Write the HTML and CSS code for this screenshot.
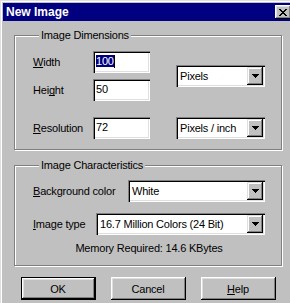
FILE: index.html
```html
<!DOCTYPE html>
<html lang="en">
<head>
    <meta charset="UTF-8">
    <title>New Image</title>
    <link rel="stylesheet" href="styles.css">
</head>
<body>
    <div class="dialog">
        <div class="titlebar">
            <span class="title">New Image</span>
            <span class="close-btn">
                <svg width="8" height="7" viewBox="0 0 8 7" shape-rendering="crispEdges"><path d="M0 0h2v1H0z M6 0h2v1H6z M1 1h2v1H1z M5 1h2v1H5z M2 2h4v1H2z M3 3h2v1H3z M2 4h4v1H2z M1 5h2v1H1z M5 5h2v1H5z M0 6h2v1H0z M6 6h2v1H6z" fill="#000"/></svg>
            </span>
        </div>

        <div class="content">
            <fieldset class="group dims">
                <legend>Image Dimensions</legend>
                <div class="dims-grid">
                    <span class="lbl"><u>W</u>idth</span>
                    <div class="field"><span class="selected">100</span><span class="caret"></span></div>
                    <div class="combo units">
                        <span class="combo-text">Pixels</span>
                        <span class="arrow"><svg width="7" height="4" viewBox="0 0 7 4" shape-rendering="crispEdges"><path d="M0 0h7v1H0z M1 1h5v1H1z M2 2h3v1H2z M3 3h1v1H3z" fill="#000"/></svg></span>
                    </div>
                    <span class="lbl">Hei<u>g</u>ht</span>
                    <div class="field">50</div>
                </div>
                <div class="dims-grid res-row">
                    <span class="lbl"><u>R</u>esolution</span>
                    <div class="field">72</div>
                    <div class="combo">
                        <span class="combo-text">Pixels / inch</span>
                        <span class="arrow"><svg width="7" height="4" viewBox="0 0 7 4" shape-rendering="crispEdges"><path d="M0 0h7v1H0z M1 1h5v1H1z M2 2h3v1H2z M3 3h1v1H3z" fill="#000"/></svg></span>
                    </div>
                </div>
            </fieldset>

            <fieldset class="group chars">
                <legend>Image Characteristics</legend>
                <div class="row">
                    <span class="lbl"><u>B</u>ackground color</span>
                    <div class="combo bg-combo">
                        <span class="combo-text">White</span>
                        <span class="arrow"><svg width="7" height="4" viewBox="0 0 7 4" shape-rendering="crispEdges"><path d="M0 0h7v1H0z M1 1h5v1H1z M2 2h3v1H2z M3 3h1v1H3z" fill="#000"/></svg></span>
                    </div>
                </div>
                <div class="row">
                    <span class="lbl"><u>I</u>mage type</span>
                    <div class="combo type-combo">
                        <span class="combo-text">16.7 Million Colors (24 Bit)</span>
                        <span class="arrow"><svg width="7" height="4" viewBox="0 0 7 4" shape-rendering="crispEdges"><path d="M0 0h7v1H0z M1 1h5v1H1z M2 2h3v1H2z M3 3h1v1H3z" fill="#000"/></svg></span>
                    </div>
                </div>
                <div class="memory">Memory Required: 14.6 KBytes</div>
            </fieldset>

            <div class="buttons">
                <button class="btn default">OK</button>
                <button class="btn">Cancel</button>
                <button class="btn"><u>H</u>elp</button>
            </div>
        </div>
    </div>
</body>
</html>
```

FILE: styles.css
```css
* {
    box-sizing: border-box;
    margin: 0;
    padding: 0;
}

body {
    overflow: hidden;
    background-color: #c0c0c0;
    font-family: 'Liberation Sans', Arial, sans-serif;
    font-size: 11px;
    letter-spacing: -0.2px;
    color: #000;
}

u {
    text-decoration-skip-ink: none;
}

.dialog {
    width: 296px;
    height: 306px;
    padding: 3px;
    background-color: #c0c0c0;
    box-shadow: inset 1px 1px #dfdfdf, inset 2px 2px #fff, inset -1px -1px #000, inset -2px -2px #808080;
}

.titlebar {
    height: 18px;
    display: flex;
    align-items: center;
    justify-content: space-between;
    padding: 0 2px 0 3px;
    background-color: #000080;
    color: #fff;
    font-size: 12px;
    font-weight: bold;
    letter-spacing: 0;
}

.close-btn {
    width: 16px;
    height: 14px;
    display: flex;
    align-items: center;
    justify-content: center;
    background-color: #c0c0c0;
    box-shadow: inset -1px -1px #000, inset 1px 1px #fff, inset -2px -2px #808080, inset 2px 2px #dfdfdf;
}

.content {
    padding: 0 11px;
}

.group {
    border: 1px solid #808080;
    box-shadow: inset 1px 1px #fff, 1px 1px #fff;
    padding: 0 16px 10px 18px;
}

.group legend {
    margin-left: 6px;
    padding: 0 2px;
    line-height: 13px;
    background-color: #c0c0c0;
}

.dims {
    margin-top: 8px;
    padding-top: 9px;
}

.dims-grid {
    display: grid;
    grid-template-columns: 60px 57px 1fr;
    grid-template-rows: 22px 22px;
    row-gap: 6px;
    align-items: center;
}

.dims-grid .units {
    grid-column: 3;
    grid-row: 1 / span 2;
}

.res-row {
    grid-template-rows: 22px;
    margin-top: 16px;
}

.field {
    height: 22px;
    padding: 3px 3px 0;
    background-color: #fff;
    box-shadow: inset 1px 1px #808080, inset 2px 2px #000, inset -1px -1px #fff, inset -2px -2px #dfdfdf;
    white-space: nowrap;
    line-height: 15px;
}

.selected {
    background-color: #000080;
    color: #fff;
}

.caret {
    display: inline-block;
    width: 1px;
    height: 13px;
    vertical-align: top;
    margin-top: 1px;
    background-color: #000;
}

.combo {
    justify-self: end;
    width: 89px;
    height: 22px;
    display: flex;
    align-items: stretch;
    padding: 2px;
    background-color: #fff;
    box-shadow: inset 1px 1px #808080, inset 2px 2px #000, inset -1px -1px #fff, inset -2px -2px #dfdfdf;
}

.combo-text {
    flex: 1;
    padding-left: 2px;
    line-height: 18px;
    white-space: nowrap;
    overflow: hidden;
}

.arrow {
    width: 16px;
    display: flex;
    align-items: center;
    justify-content: center;
    background-color: #c0c0c0;
    box-shadow: inset -1px -1px #000, inset 1px 1px #dfdfdf, inset -2px -2px #808080, inset 2px 2px #fff;
}

.chars {
    margin-top: 9px;
    padding-top: 8px;
}

.row {
    display: flex;
    align-items: center;
    height: 22px;
    margin-bottom: 11px;
}

.row .combo {
    margin-left: auto;
}

.bg-combo {
    width: 137px;
}

.type-combo {
    width: 169px;
}

.memory {
    margin-top: -4px;
    text-align: center;
    line-height: 13px;
}

.buttons {
    display: flex;
    justify-content: center;
    gap: 15px;
    margin-top: 11px;
}

.btn {
    width: 75px;
    height: 23px;
    border: none;
    background-color: #c0c0c0;
    font-family: inherit;
    font-size: 11px;
    letter-spacing: -0.2px;
    color: #000;
    box-shadow: inset -1px -1px #000, inset 1px 1px #fff, inset -2px -2px #808080, inset 2px 2px #dfdfdf;
}

.btn.default {
    box-shadow: inset 0 0 0 1px #000, inset -2px -2px #000, inset 2px 2px #fff, inset -3px -3px #808080, inset 3px 3px #dfdfdf;
}
```
